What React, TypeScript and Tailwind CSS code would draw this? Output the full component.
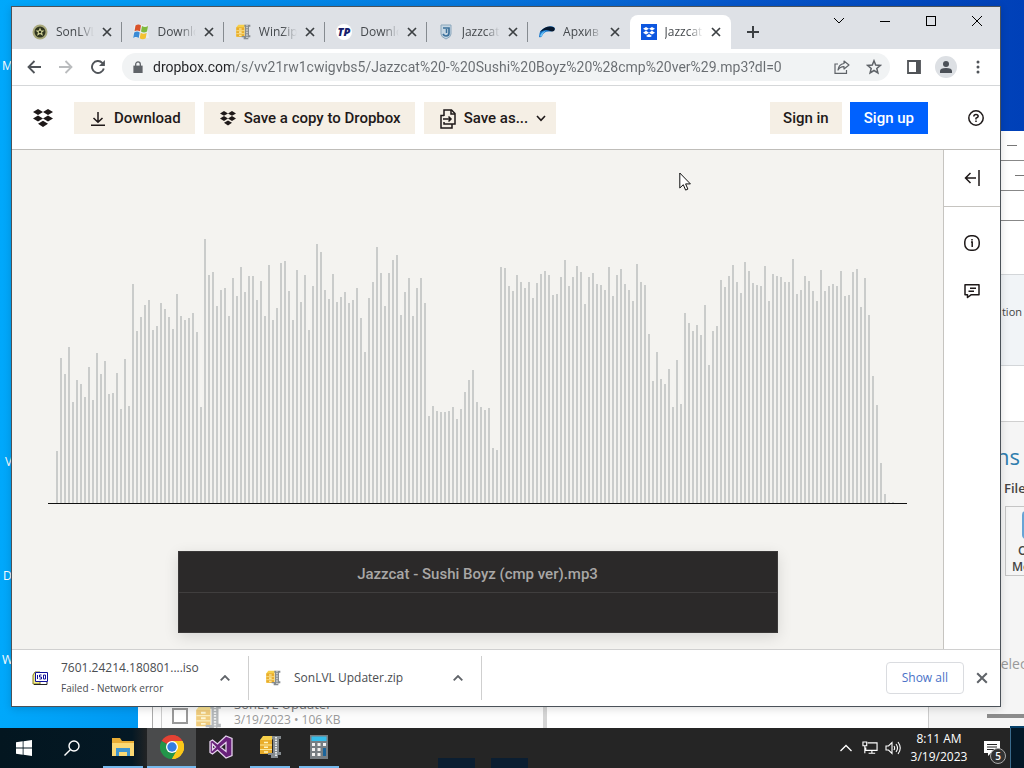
import React from "react";

const WAVE_TOPS = [
  677, 398, 447, 365, 530, 466, 477, 516, 426, 525, 384, 447, 408, 506, 504, 445, 552, 401, 543, 178,
  318, 276, 241, 225, 314, 304, 234, 251, 276, 311, 206, 272, 285, 278, 264, 322, 545, 41, 150, 141,
  243, 196, 189, 273, 158, 214, 125, 201, 152, 152, 225, 168, 273, 120, 284, 249, 115, 108, 197, 285,
  136, 231, 149, 316, 182, 56, 81, 196, 222, 148, 231, 216, 201, 234, 225, 189, 278, 380, 219, 171,
  66, 143, 244, 143, 105, 90, 270, 201, 158, 273, 190, 159, 233, 573, 542, 558, 561, 561, 557, 547,
  583, 552, 500, 465, 435, 532, 547, 555, 549, 669, 675, 127, 129, 184, 199, 149, 170, 188, 170, 220,
  174, 147, 137, 150, 209, 208, 155, 106, 182, 156, 122, 142, 237, 156, 144, 177, 180, 194, 127, 213,
  150, 133, 177, 196, 228, 117, 171, 180, 328, 467, 382, 461, 478, 432, 545, 405, 538, 264, 293, 318,
  299, 331, 240, 420, 317, 302, 165, 185, 153, 120, 171, 205, 111, 139, 175, 180, 182, 122, 228, 147,
  153, 157, 171, 171, 101, 207, 196, 154, 168, 198, 229, 134, 198, 182, 177, 182, 138, 213, 210, 141,
  133, 246, 160, 270, 454, 541, 713, 808, 831, 832,
];

function DropboxMark({ className }: { className: string }) {
  return (
    <svg viewBox="0 0 20 18" className={className} fill="currentColor" aria-hidden="true">
      <path d="M5 0l5 3-5 3-5-3zM15 0l5 3-5 3-5-3zM5 6.400l5 3-5 3-5-3zM15 6.400l5 3-5 3-5-3zM10 11.800l5 3-5 3.200-5-3.200z" />
    </svg>
  );
}

function ZipIcon({ className }: { className: string }) {
  return (
    <svg viewBox="0 0 24 24" className={className} aria-hidden="true">
      <path d="M2 5l3-4h11l-2 4v14H2z" fill="#f6cf4a" />
      <path d="M2 5h12v14H2z" fill="#e9ad2b" />
      <path d="M2 10h12M2 14.500h12" stroke="#fbe79a" strokeWidth="1.200" />
      <path d="M6 7.500h4M6 12.200h4M6 17h4" stroke="#fff3bd" strokeWidth="1.600" />
      <path d="M14 1h9v3h-2v13h2v3h-3v3h-7v-3h-3v-2h5V4h-1z" fill="#858b8f" />
      <path d="M18 2v20" stroke="#e4e7e8" strokeWidth="2" strokeDasharray="1.500 1" />
    </svg>
  );
}

function Cross({ className }: { className: string }) {
  return (
    <svg viewBox="0 0 10 10" className={className} stroke="currentColor" fill="none" aria-hidden="true">
      <path d="M1 1l8 8M9 1l-8 8" strokeWidth="1.700" />
    </svg>
  );
}

const favicons: Record<string, React.ReactNode> = {
  son: (
    <svg viewBox="0 0 16 16" className="size-4">
      <circle cx="8" cy="8" r="7.500" fill="#a9a97c" />
      <circle cx="8" cy="8" r="5.500" fill="#30351f" />
      <path d="M8 3.500l1.300 3h3.200L10 8.600l1 3.200-3-1.900-3 1.900 1-3.200-2.500-2.100h3.200z" fill="#d2d397" />
      <circle cx="8" cy="8" r="1.300" fill="#30351f" />
    </svg>
  ),
  windows: (
    <svg viewBox="0 0 16 16" className="size-4">
      <path d="M1 1h13l2 13H0z" fill="#e8edf0" />
      <path d="M2.500 1.500q3-2 5.500 0L7 7.300Q4 5.500 1.500 7.300z" fill="#d9532a" />
      <path d="M9 2q3 2 6 0l-1 5.500q-3 2-6 0z" fill="#7eb93c" />
      <path d="M1.200 8.500q3-2 5.500 0l-1 5.500q-3-2-5.500 0z" fill="#3b8bd5" />
      <path d="M7.700 8.700q3 2 6 0l-1 5.500q-3 2-6 0z" fill="#f3c232" />
    </svg>
  ),
  zip: <ZipIcon className="size-4" />,
  tp: (
    <svg viewBox="0 0 16 16" className="size-4">
      <circle cx="8" cy="8" r="8" fill="#fff" />
      <text x="8" y="12" textAnchor="middle" fontSize="11" fontWeight="800" fontStyle="italic" fill="#16206b" fontFamily="Open Sans, sans-serif">TP</text>
    </svg>
  ),
  shield: (
    <svg viewBox="0 0 16 16" className="size-4">
      <path d="M3 1h10v9q0 3-5 5-5-2-5-5z" fill="#c5d6e3" stroke="#8ba7bc" />
      <path d="M5 4h6v5q0 3-3 3-2 0-3-2" fill="none" stroke="#3d719b" strokeWidth="1.700" />
      <path d="M8.500 5v4" stroke="#3d719b" strokeWidth="1.500" />
    </svg>
  ),
  swoosh: (
    <svg viewBox="0 0 16 16" className="size-4">
      <path d="M0 13Q0 5 8 3q7-2 8 2-2 3-6 2.500Q5 7 3 12q-1 2-3 1z" fill="#1776ca" />
      <path d="M1 8Q7 1 14 3q3 1 1 4-2 1-5-.5Q6 5 1 8z" fill="#06182f" />
      <path d="M1 12q1-4 6-5.500Q3.500 9 3 12q-1 1.500-2 0z" fill="#6ec4f7" />
    </svg>
  ),
  dropbox: (
    <span className="grid size-4 place-items-center bg-[#0d57e0] text-white">
      <DropboxMark className="w-3" />
    </span>
  ),
};

const tabs = [
  { icon: "son", title: "SonLVL" },
  { icon: "windows", title: "Downlo" },
  { icon: "zip", title: "WinZip" },
  { icon: "tp", title: "Downlo" },
  { icon: "shield", title: "Jazzcat" },
  { icon: "swoosh", title: "Архив" },
  { icon: "dropbox", title: "Jazzcat", active: true },
];

function TabStrip() {
  return (
    <div className="flex h-[42px] shrink-0 justify-between bg-[#dee1e6]">
      <div className="flex min-w-0 items-end pl-[9px]">
        <div role="tablist" className="flex w-[710px] shrink">
          {tabs.map((tab, i) => (
            <div
              key={i}
              className={
                tab.active
                  ? "flex h-[34px] min-w-0 flex-1 items-center rounded-t-lg bg-white pr-2.5 pl-[11px]"
                  : "relative flex h-[34px] min-w-0 flex-1 items-center pr-2.5 pl-[11px]"
              }
            >
              <button role="tab" aria-selected={!!tab.active} className="flex min-w-0 flex-1 items-center gap-2 text-left">
                <span className="shrink-0">{favicons[tab.icon]}</span>
                <span className="min-w-0 flex-1 overflow-hidden text-xs whitespace-nowrap text-[#45494d] [mask-image:linear-gradient(to_right,black_60%,transparent)]">
                  {tab.title}
                </span>
              </button>
              <button aria-label="Close tab" className="grid w-[18px] shrink-0 place-items-center pl-2 text-[#3c4043]">
                <Cross className="size-2.5" />
              </button>
              {i < 5 && <span className="absolute right-0 h-5 w-px bg-[#868b90]" />}
            </div>
          ))}
        </div>
        <button aria-label="New tab" className="grid h-[34px] w-11 place-items-center text-[#3c4043]">
          <svg viewBox="0 0 12 12" className="size-3" stroke="currentColor" strokeWidth="2"><path d="M6 0v12M0 6h12" /></svg>
        </button>
      </div>
      <div className="flex h-7 shrink-0 text-black">
        <button aria-label="Search tabs" className="grid w-[46px] place-items-center">
          <svg viewBox="0 0 12 8" className="w-3" fill="none" stroke="currentColor"><path d="M1 1l5 5 5-5" /></svg>
        </button>
        <button aria-label="Minimize" className="grid w-[46px] place-items-center"><span className="h-px w-2.5 bg-black" /></button>
        <button aria-label="Maximize" className="grid w-[46px] place-items-center"><span className="size-2.5 border border-black" /></button>
        <button aria-label="Close" className="grid w-[46px] place-items-center">
          <svg viewBox="0 0 10 10" className="size-2.5" stroke="currentColor"><path d="M0 0l10 10M10 0L0 10" /></svg>
        </button>
      </div>
    </div>
  );
}

function ToolButton({ label, children }: { label: string; children: React.ReactNode }) {
  return (
    <button aria-label={label} className="grid h-7 w-8 shrink-0 place-items-center text-[#5f6368]">
      {children}
    </button>
  );
}

function Toolbar() {
  return (
    <div className="flex h-[37px] shrink-0 items-center border-b border-[#d5d7d9] bg-white px-1.5">
      <ToolButton label="Back">
        <svg viewBox="0 0 14 14" className="size-3.5" fill="none" stroke="#505459" strokeWidth="1.800"><path d="M14 7H1.500M7.500 1l-6 6 6 6" /></svg>
      </ToolButton>
      <ToolButton label="Forward">
        <svg viewBox="0 0 14 14" className="size-3.5" fill="none" stroke="#babcbe" strokeWidth="1.800"><path d="M0 7h12.500M6.500 1l6 6-6 6" /></svg>
      </ToolButton>
      <ToolButton label="Reload">
        <svg viewBox="0 0 14 14" className="size-3.5" fill="none" stroke="#505459" strokeWidth="1.900">
          <path d="M12.800 8.500A6 6 0 1 1 11.300 2.800L13 4.500" />
          <path d="M13.900 0v6H8z" fill="#505459" stroke="none" />
        </svg>
      </ToolButton>
      <div className="mx-2 flex h-7 min-w-0 flex-1 items-center rounded-full bg-[#f1f3f4]">
        <svg viewBox="0 0 10 13" className="mr-2.5 ml-[11px] h-3 w-2.5 shrink-0" fill="#5f6368">
          <path d="M0 5h10v8H0z" /><path d="M2.500 6V3.500a2.500 2.500 0 0 1 5 0V6" fill="none" stroke="#5f6368" strokeWidth="1.400" />
        </svg>
        <input
          aria-label="Address"
          readOnly
          value="dropbox.com/s/vv21rw1cwigvbs5/Jazzcat%20-%20Sushi%20Boyz%20%28cmp%20ver%29.mp3?dl=0"
          className="min-w-0 flex-1 bg-linear-[to_right,#202124_78px,#686c70_78px] bg-clip-text font-[Roboto,sans-serif] text-sm text-transparent outline-none"
        />
        <ToolButton label="Share">
          <svg viewBox="0 0 16 14" className="w-4" fill="none" stroke="currentColor" strokeWidth="1.200">
            <path d="M4 4H1v9.400h11.500V10" /><path d="M10 1l5 4-5 4V6.600Q6 6.500 4 10q.5-5.500 6-6.500z" strokeLinejoin="round" />
          </svg>
        </ToolButton>
        <ToolButton label="Bookmark">
          <svg viewBox="0 0 16 16" className="size-4" fill="none" stroke="currentColor" strokeWidth="1.500">
            <path d="M8 1.800l1.700 4.300 4.600.3-3.500 3 1.100 4.500L8 11.500l-3.900 2.400 1.100-4.500-3.500-3 4.600-.3z" />
          </svg>
        </ToolButton>
      </div>
      <ToolButton label="Side panel">
        <svg viewBox="0 0 14 14" className="size-3.5"><path d="M1 1h12v12H1z" fill="none" stroke="#505357" strokeWidth="1.800" /><path d="M9 1h4v12H9z" fill="#505357" /></svg>
      </ToolButton>
      <ToolButton label="Profile">
        <span className="grid size-[22px] place-items-center rounded-full bg-[#dde0e4]">
          <svg viewBox="0 0 14 14" className="size-3.5" fill="#4b5057"><circle cx="7" cy="4" r="3" /><path d="M1 13v-2q0-3 6-3t6 3v2z" /></svg>
        </span>
      </ToolButton>
      <ToolButton label="Menu">
        <svg viewBox="0 0 4 14" className="h-3.5" fill="#505459"><circle cx="2" cy="2" r="1.500" /><circle cx="2" cy="7" r="1.500" /><circle cx="2" cy="12" r="1.500" /></svg>
      </ToolButton>
    </div>
  );
}

function SiteHeader() {
  return (
    <header className="flex h-16 shrink-0 items-center border-b border-[#bfbdb9] bg-white pl-[21px] font-[Roboto,sans-serif] text-[15px] font-medium text-[#1e1919]">
      <a href="#" aria-label="Dropbox" className="mr-[21px]"><DropboxMark className="w-5" /></a>
      <div className="flex gap-[9px]">
        <button className="flex h-8 items-center gap-2 bg-[#f5efe5] pt-0.5 pr-3.5 pl-4">
          <svg viewBox="0 0 16 16" className="size-4" fill="none" stroke="currentColor" strokeWidth="1.500"><path d="M1 14.300h14M8 1v10M3.500 7L8 11.300 12.500 7" /></svg>
          Download
        </button>
        <button className="flex h-8 items-center gap-2 bg-[#f5efe5] pt-0.5 pr-3.5 pl-4">
          <DropboxMark className="w-4" />
          Save a copy to Dropbox
        </button>
        <button className="flex h-8 items-center gap-2 bg-[#f5efe5] pt-0.5 pr-2.5 pl-4">
          <svg viewBox="0 0 16 20" className="w-4" fill="none" stroke="currentColor" strokeWidth="1.500">
            <path d="M4 7V1h7.500L15 4.500V15H4v-2" /><path d="M11 1v4h4" /><path d="M4 6.500H1V19h11v-4" /><path d="M3 10h8M8.500 7.500L11 10l-2.500 2.500" />
          </svg>
          Save as...
          <svg viewBox="0 0 10 7" className="w-2.5" fill="none" stroke="currentColor" strokeWidth="1.600"><path d="M1 1l4 4.300L9 1" /></svg>
        </button>
      </div>
      <div className="ml-auto flex gap-2">
        <button className="h-8 bg-[#f5efe5] px-[13px] pt-0.5">Sign in</button>
        <button className="h-8 bg-[#0061fe] px-3.5 pt-0.5 text-white">Sign up</button>
      </div>
      <button aria-label="Help" className="ml-10 pr-4">
        <svg viewBox="0 0 16 16" className="size-4" fill="none" stroke="currentColor" strokeWidth="1.500">
          <circle cx="8" cy="8" r="7.200" /><path d="M5.800 6.500Q5.900 4.500 8 4.500t2.200 1.800Q10.200 7.500 8 8.200V9.500" /><path d="M8 10.500V12" />
        </svg>
      </button>
    </header>
  );
}

function Preview() {
  return (
    <main className="flex min-w-0 flex-1 flex-col items-center justify-end bg-[#f4f3f0] px-9 pb-4">
      <svg viewBox="0 0 859 280" className="mb-[47px] w-full" aria-label="Waveform" shapeRendering="crispEdges">
        {WAVE_TOPS.map((top, i) => {
          const h = Math.round((834 - top) / 3);
          return <rect key={i} x={8 + i * 4} y={279 - h} width="2" height={h} fill="#cacccb" />;
        })}
        <rect y="279" width="859" height="1" fill="#111" />
      </svg>
      <section className="w-full max-w-[600px] border border-[#3a3838] bg-[#2b2929] shadow-[0_4px_14px_rgba(0,0,0,0.12)]">
        <h1 className="border-b border-[#403e3e] pt-3 pb-2 text-center font-[Roboto,sans-serif] text-[15px] leading-5 font-medium text-[#a9a7a6]">
          Jazzcat - Sushi Boyz (cmp ver).mp3
        </h1>
        <div className="h-[39px]" />
      </section>
    </main>
  );
}

function SidePanel() {
  return (
    <aside className="flex w-[57px] shrink-0 flex-col border-l border-[#c6c4c0] bg-white text-[#1e1919]">
      <button aria-label="Expand panel" className="grid h-[57px] place-items-center border-b border-[#c6c4c0]">
        <svg viewBox="0 0 16 16" className="size-4" fill="none" stroke="currentColor" strokeWidth="1.500"><path d="M15 0v16M12 8H1.500M6.500 3L1.500 8l5 5" /></svg>
      </button>
      <div className="flex flex-col items-center gap-8 pt-7">
        <button aria-label="File info">
          <svg viewBox="0 0 16 16" className="size-4" fill="none" stroke="currentColor" strokeWidth="1.500">
            <rect x=".8" y=".8" width="14.400" height="14.400" rx="6" /><path d="M7 7h1.200v5M8 4v1.400" />
          </svg>
        </button>
        <button aria-label="Comments">
          <svg viewBox="0 0 16 16" className="size-4" fill="none" stroke="currentColor" strokeWidth="1.500">
            <path d="M1 1.800h14v10H7L3.500 14.500v-2.700H1z" strokeLinejoin="round" /><path d="M6 5.300h6M4.500 8.300h5.500" />
          </svg>
        </button>
      </div>
    </aside>
  );
}

function Chevron() {
  return (
    <svg viewBox="0 0 10 6" className="w-2.5" fill="none" stroke="#5f6368" strokeWidth="1.800"><path d="M.7 5.300L5 1l4.300 4.300" /></svg>
  );
}

function DownloadBar() {
  return (
    <footer className="flex h-[57px] shrink-0 items-center border-t border-[#d0d0d0] bg-white text-[#4a4d51]">
      <div className="flex h-11 w-[237px] items-center border-r border-[#cfcfcf] pr-[18px] pl-5">
        <svg viewBox="0 0 16 14" className="w-4 shrink-0">
          <path d="M1 4l2-3h5v12H1z" fill="#f4ed8b" stroke="#807b25" /><path d="M2 13.500h13V11" stroke="#222" fill="none" />
          <path d="M3.500 1.500h12v9h-12z" fill="#fff" stroke="#10109a" />
          <path d="M5.500 4v4M9.500 4h-2v2h2v2h-2M11.500 4h2v4h-2z" fill="none" stroke="#10109a" />
        </svg>
        <div className="ml-[13px] flex-1">
          <div className="text-xs leading-5">7601.24214.180801....iso</div>
          <div className="text-[10px] leading-5">Failed - Network error</div>
        </div>
        <button aria-label="Download options"><Chevron /></button>
      </div>
      <div className="flex h-11 w-[233px] items-center border-r border-[#cfcfcf] pr-[18px] pl-4">
        <ZipIcon className="size-4 shrink-0" />
        <div className="ml-[13px] flex-1 text-xs">SonLVL Updater.zip</div>
        <button aria-label="Download options"><Chevron /></button>
      </div>
      <button className="mr-3 ml-auto h-8 rounded border border-[#dadce0] px-[15px] text-xs font-medium text-[#4a72c8]">Show all</button>
      <button aria-label="Close downloads bar" className="mr-3 text-[#5f6368]"><Cross className="size-3" /></button>
    </footer>
  );
}

function BackgroundWindow() {
  return (
    <div className="absolute top-[131px] right-0 bottom-0 left-[138px] flex bg-white text-xs text-[#444]">
      <div className="flex w-[409px] shrink-0 flex-col justify-end border-r-4 border-[#d5d5d5] pl-3.5">
        <div className="flex h-10 items-stretch border-l border-[#aaa] bg-[#fcfcfc]">
          <div className="ml-2 flex flex-1 items-start gap-1.5 overflow-hidden border-l border-[#ccc] pl-2.5">
            <input type="checkbox" aria-label="Select file" className="mt-5 size-4 shrink-0 appearance-none border-2 border-[#999] bg-white" />
            <ZipIcon className="mt-4 size-7 shrink-0 opacity-60" />
            <div className="mt-2 ml-1.5 leading-4">
              <div className="text-[13px] text-[#777]">SonLVL Updater</div>
              <div className="text-[#999]">3/19/2023 • 106 KB</div>
            </div>
          </div>
        </div>
      </div>
      <div className="flex-1" />
      <div className="flex w-24 shrink-0 flex-col overflow-hidden border-l border-[#ccc] bg-[#f5f5f5]">
        <div className="flex h-[30px] shrink-0 items-center border-b border-[#888] bg-white pl-[78px]"><span className="h-px w-2.5 bg-[#777]" /></div>
        <div className="flex h-[30px] shrink-0 items-center border-b border-[#888] bg-white pl-[86px]"><span className="h-px w-2.5 bg-[#777]" /></div>
        <div className="h-[30px] shrink-0 border-b border-[#888] bg-white" />
        <div className="h-[53px] shrink-0 bg-white" />
        <div className="h-[92px] shrink-0 border-y border-[#d3d6d9] bg-[#f1f4f7] pt-[30px] pr-0.5 text-right text-[11px]">tion</div>
        <div className="h-14 shrink-0 border-b border-[#d0d0d0] bg-white" />
        <div className="shrink-0 pt-[18px] pr-1 text-right text-[22px] leading-8 text-[#2f7dae]">ns</div>
        <div className="shrink-0 pl-[75px] text-[13px] leading-8 font-semibold">File</div>
        <div className="mt-0.5 ml-[76px] h-[70px] w-20 shrink-0 border border-[#c5c5c5] pt-1 font-semibold">
          <div className="ml-4 h-7 w-8 rounded bg-[#68a4d5]" />
          <div className="ml-3 pt-1 leading-4">O</div>
          <div className="ml-1.5 leading-4">Me</div>
        </div>
        <div className="mt-[76px] shrink-0 pl-16 text-sm leading-6 whitespace-nowrap text-[#999]">Select</div>
        <div className="mt-[38px] ml-[58px] h-1 shrink-0 bg-[#8c8c8c]" />
        <div className="mt-2 ml-[81px] h-3 shrink-0 bg-[#06416b]" />
      </div>
    </div>
  );
}

const taskIcons: { name: string; slot: string; bar: string; icon: React.ReactNode }[] = [
  {
    name: "File Explorer", slot: "", bar: "w-10",
    icon: (
      <svg viewBox="0 0 22 20" className="w-[22px]"><path d="M0 1h8l2 3h12v15H0z" fill="#e9ad35" /><path d="M0 6h22v13H0z" fill="#fbd873" /><path d="M4 19v-8h14v8h-3v-4H7v4z" fill="#3e94cf" /></svg>
    ),
  },
  {
    name: "Chrome", slot: "bg-[#4a4b4c]", bar: "w-full",
    icon: (
      <svg viewBox="0 0 24 24" className="size-6">
        <path d="M12 12L1.600 6A12 12 0 0 1 22.400 6z" fill="#e34234" /><path d="M12 12L22.400 6A12 12 0 0 1 12 24z" fill="#fbc719" /><path d="M12 12v12A12 12 0 0 1 1.600 6z" fill="#23954a" />
        <path d="M12 6h10.400L17 15z" fill="#fbc719" /><path d="M12 6h10.400A12 12 0 0 0 12 0z" fill="#e34234" /><path d="M17.200 15L12 24l-2-7z" fill="#23954a" /><path d="M17.200 15L12 24A12 12 0 0 0 22.400 6H12z" fill="#fbc719" />
        <circle cx="12" cy="12" r="6" fill="#fff" /><circle cx="12" cy="12" r="4.700" fill="#347de0" />
      </svg>
    ),
  },
  {
    name: "Visual Studio", slot: "", bar: "hidden",
    icon: (
      <svg viewBox="0 0 24 24" className="size-6">
        <path fillRule="evenodd" d="M17 1l6 2.500v17L17 23l-8.500-8-5 4L1 17.500v-11L3.500 5l5 4zM17 7.500L11.500 12l5.500 4.500zM3.500 9v6l3-3z" fill="#68217a" stroke="#e6d3ee" strokeWidth="1.300" />
      </svg>
    ),
  },
  { name: "WinZip", slot: "", bar: "w-10", icon: <ZipIcon className="size-6" /> },
  {
    name: "Calculator", slot: "", bar: "w-10",
    icon: (
      <svg viewBox="0 0 18 24" className="h-6">
        <path d="M0 0h18v24H0z" fill="#777e83" /><path d="M1.500 1.500h15V6h-15z" fill="#35bce9" />
        <path d="M2 8h3v3H2zM7.500 8h3v3h-3zM13 8h3v3h-3zM2 13h3v3H2zM7.500 13h3v3h-3zM2 18h3v3H2zM7.500 18h3v3h-3z" fill="#f2f2f2" /><path d="M13 13h3v8h-3z" fill="#1b649a" />
      </svg>
    ),
  },
];

function Taskbar() {
  return (
    <nav className="relative flex h-10 shrink-0 bg-linear-[to_right,#031620_0,#041824_132px,#252525_148px] text-white">
      <button aria-label="Start" className="grid w-12 place-items-center">
        <svg viewBox="0 0 16 16" className="size-4" fill="#fff"><path d="M0 2.300L6.700 1.300v6.200H0zM7.500 1.200L16 0v7.500H7.500zM0 8.400h6.700v6.300L0 13.700zM7.500 8.400H16V16l-8.500-1.200z" /></svg>
      </button>
      <button aria-label="Search" className="mr-0.5 grid w-12 place-items-center">
        <svg viewBox="0 0 16 16" className="size-4" fill="none" stroke="#fff" strokeWidth="1.400"><circle cx="10" cy="6" r="5" /><path d="M6.300 9.700L.5 15.500" /></svg>
      </button>
      {taskIcons.map((t) => (
        <button key={t.name} aria-label={t.name} className={"flex w-[49px] flex-col items-center " + t.slot}>
          <span className="grid h-[38px] place-items-center">{t.icon}</span>
          <span className={"h-0.5 bg-[#76b9ed] " + t.bar} />
        </button>
      ))}
      <div className="ml-[95px] flex items-end gap-4">
        <span className="h-2.5 w-[37px] bg-[#0b1e31]" />
        <span className="h-2.5 w-[37px] bg-[#0b1e31]" />
      </div>
      <div className="ml-auto flex items-center">
        <button aria-label="Hidden icons" className="mr-2.5"><svg viewBox="0 0 12 8" className="w-3" fill="none" stroke="#fff" strokeWidth="1.300"><path d="M.5 7L6 1.500 11.500 7" /></svg></button>
        <svg viewBox="0 0 17 14" className="mr-[7px] w-4" fill="none" stroke="#fff" strokeWidth="1.200"><path d="M6 2h10v8H4V7M1 1h4v4H1zM3 5v8M7 13h7M10.500 10v3" /></svg>
        <svg viewBox="0 0 16 14" className="mr-2 w-4" fill="none" stroke="#fff" strokeWidth="1.100"><path d="M1 5h2.500L7 1.500v11L3.500 9H1zM9 5q1.300 2 0 4M11 3q3 4 0 8M13 1q4.500 6 0 12" /></svg>
        <div className="w-[60px] text-center text-xs leading-[18px] whitespace-nowrap"><div>8:11 AM</div><div>3/19/2023</div></div>
        <button aria-label="Notifications" className="relative mr-1 ml-[9px] grid h-10 w-7 place-items-center">
          <svg viewBox="0 0 16 15" className="w-4" fill="#fff"><path d="M0 0h16v12H7l-3 3v-3H0z" /><path d="M3 3.500h10M3 6h10M3 8.500h7" stroke="#252525" /></svg>
          <span className="absolute right-0 bottom-1 grid size-4 place-items-center rounded-full border border-[#aaa] bg-[#333] text-[10px] font-semibold">5</span>
        </button>
        <span className="h-full w-3.5 border-l border-[#3a6b8c] bg-[#031827]" />
      </div>
    </nav>
  );
}

const desktopLabels = [
  { text: "M", place: "absolute top-[58px] left-[2px]" },
  { text: "V", place: "absolute top-[454px] left-[5px]" },
  { text: "D", place: "absolute top-[568px] left-[3px]" },
  { text: "W", place: "absolute top-[652px] left-[2px]" },
];

export default function App() {
  return (
    <div className="flex h-screen flex-col overflow-hidden font-['Open_Sans',sans-serif]">
      <div className="relative min-h-0 flex-1 overflow-hidden bg-linear-[to_right,#00a8fb_0%,#0091ee_20%,#0779de_45%,#0656ca_72%,#0040b8_100%]">
        {desktopLabels.map((l) => (
          <span key={l.text} className={l.place + " text-xs leading-4 text-white"}>{l.text}</span>
        ))}
        <BackgroundWindow />
        <div className="absolute top-[6px] right-[23px] bottom-[21px] left-[11px] flex flex-col border border-[#4b5259] bg-white shadow-[0_2px_8px_rgba(0,0,0,0.15)]">
          <TabStrip />
          <Toolbar />
          <SiteHeader />
          <div className="flex min-h-0 flex-1">
            <Preview />
            <SidePanel />
          </div>
          <DownloadBar />
        </div>
        <svg viewBox="0 0 12 19" className="absolute top-[172px] left-[679px] w-3" fill="#fff" stroke="#111">
          <path d="M.8 1v15l3.500-3.300 2.300 5.400 2.300-1-2.300-5.200h4.800z" />
        </svg>
      </div>
      <Taskbar />
    </div>
  );
}
